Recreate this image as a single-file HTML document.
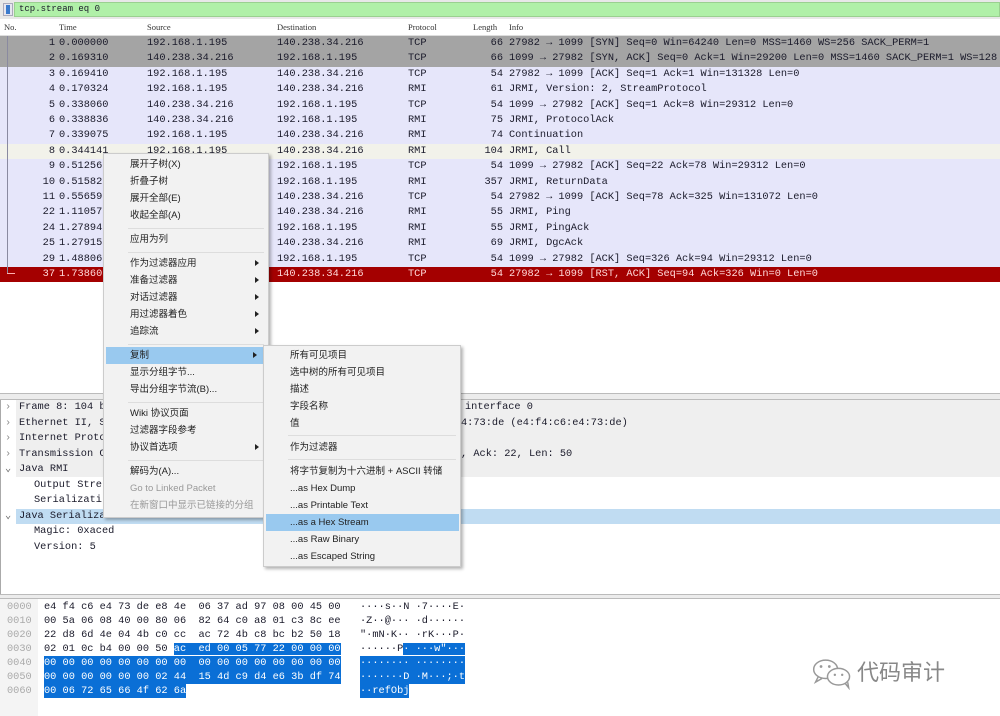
<!DOCTYPE html>
<html><head><meta charset="utf-8">
<style>
*{margin:0;padding:0;box-sizing:border-box}
body{width:1000px;height:716px;overflow:hidden;background:#fff;position:relative;font-family:"Liberation Mono",monospace;font-size:10.3px;color:#1a1a2a}
.a{position:absolute;white-space:pre}
.row{position:absolute;left:0;width:1000px;height:15.4px;line-height:15.4px}
.row span{position:absolute;white-space:pre}
.m{font-family:"Liberation Sans","Noto Sans CJK SC",sans-serif;font-size:9.5px;color:#222}
.mi{position:absolute;left:0;width:100%;height:17px;line-height:17px}
.mi span{position:absolute;left:26px}
.arr{position:absolute;right:9px;top:5px;width:0;height:0;border-left:4px solid #222;border-top:3.5px solid transparent;border-bottom:3.5px solid transparent}
.sep{position:absolute;left:24px;right:4px;height:1px;background:#ddd}
.hx{position:absolute;height:14px;line-height:14px;white-space:pre;font-size:10.3px}
.sel{background:#0a6fd6;color:#fff}
.hd span{position:absolute;top:0}
</style></head><body>
<!-- filter bar -->
<div class="a" style="left:0;top:0;width:1000px;height:19px;background:#e8e8e8"></div>
<div class="a" style="left:14px;top:2px;width:986px;height:15px;background:#b0f0a8;border:1px solid #9ad090"></div>
<div class="a" style="left:3px;top:3px;width:10px;height:13px;background:#e6e6f0;border:1px solid #aab"></div>
<div class="a" style="left:6px;top:5px;width:4px;height:9px;background:#3a7acc"></div>
<div class="a" style="left:19px;top:2px;line-height:15px;font-size:9px">tcp.stream eq 0</div>
<!-- header -->
<div class="hd" style="position:absolute;left:0;top:19px;width:1000px;height:17px;background:#fff;border-bottom:1px solid #ddd;font-family:'Liberation Serif',serif;font-size:8.5px;line-height:17px;color:#333"><span style="left:4px">No.</span><span style="left:59px">Time</span><span style="left:147px">Source</span><span style="left:277px">Destination</span><span style="left:408px">Protocol</span><span style="left:473px">Length</span><span style="left:509px">Info</span></div>
<!-- packet list rows -->
<div style="position:absolute;left:0;top:36px">
<div class="row" style="top:0;background:#a4a4a4"><span style="right:945px">1</span><span style="left:59px">0.000000</span><span style="left:147px">192.168.1.195</span><span style="left:277px">140.238.34.216</span><span style="left:408px">TCP</span><span style="right:497px">66</span><span style="left:509px">27982 → 1099 [SYN] Seq=0 Win=64240 Len=0 MSS=1460 WS=256 SACK_PERM=1</span></div>
<div class="row" style="top:15.4px;background:#a4a4a4"><span style="right:945px">2</span><span style="left:59px">0.169310</span><span style="left:147px">140.238.34.216</span><span style="left:277px">192.168.1.195</span><span style="left:408px">TCP</span><span style="right:497px">66</span><span style="left:509px">1099 → 27982 [SYN, ACK] Seq=0 Ack=1 Win=29200 Len=0 MSS=1460 SACK_PERM=1 WS=128</span></div>
<div class="row" style="top:30.8px;background:#e6e6fa"><span style="right:945px">3</span><span style="left:59px">0.169410</span><span style="left:147px">192.168.1.195</span><span style="left:277px">140.238.34.216</span><span style="left:408px">TCP</span><span style="right:497px">54</span><span style="left:509px">27982 → 1099 [ACK] Seq=1 Ack=1 Win=131328 Len=0</span></div>
<div class="row" style="top:46.2px;background:#e6e6fa"><span style="right:945px">4</span><span style="left:59px">0.170324</span><span style="left:147px">192.168.1.195</span><span style="left:277px">140.238.34.216</span><span style="left:408px">RMI</span><span style="right:497px">61</span><span style="left:509px">JRMI, Version: 2, StreamProtocol</span></div>
<div class="row" style="top:61.6px;background:#e6e6fa"><span style="right:945px">5</span><span style="left:59px">0.338060</span><span style="left:147px">140.238.34.216</span><span style="left:277px">192.168.1.195</span><span style="left:408px">TCP</span><span style="right:497px">54</span><span style="left:509px">1099 → 27982 [ACK] Seq=1 Ack=8 Win=29312 Len=0</span></div>
<div class="row" style="top:77px;background:#e6e6fa"><span style="right:945px">6</span><span style="left:59px">0.338836</span><span style="left:147px">140.238.34.216</span><span style="left:277px">192.168.1.195</span><span style="left:408px">RMI</span><span style="right:497px">75</span><span style="left:509px">JRMI, ProtocolAck</span></div>
<div class="row" style="top:92.4px;background:#e6e6fa"><span style="right:945px">7</span><span style="left:59px">0.339075</span><span style="left:147px">192.168.1.195</span><span style="left:277px">140.238.34.216</span><span style="left:408px">RMI</span><span style="right:497px">74</span><span style="left:509px">Continuation</span></div>
<div class="row" style="top:107.8px;background:#f2f2ea"><span style="right:945px">8</span><span style="left:59px">0.344141</span><span style="left:147px">192.168.1.195</span><span style="left:277px">140.238.34.216</span><span style="left:408px">RMI</span><span style="right:497px">104</span><span style="left:509px">JRMI, Call</span></div>
<div class="row" style="top:123.2px;background:#e6e6fa"><span style="right:945px">9</span><span style="left:59px">0.51256</span><span style="left:277px">192.168.1.195</span><span style="left:408px">TCP</span><span style="right:497px">54</span><span style="left:509px">1099 → 27982 [ACK] Seq=22 Ack=78 Win=29312 Len=0</span></div>
<div class="row" style="top:138.6px;background:#e6e6fa"><span style="right:945px">10</span><span style="left:59px">0.51582</span><span style="left:277px">192.168.1.195</span><span style="left:408px">RMI</span><span style="right:497px">357</span><span style="left:509px">JRMI, ReturnData</span></div>
<div class="row" style="top:154px;background:#e6e6fa"><span style="right:945px">11</span><span style="left:59px">0.55659</span><span style="left:277px">140.238.34.216</span><span style="left:408px">TCP</span><span style="right:497px">54</span><span style="left:509px">27982 → 1099 [ACK] Seq=78 Ack=325 Win=131072 Len=0</span></div>
<div class="row" style="top:169.4px;background:#e6e6fa"><span style="right:945px">22</span><span style="left:59px">1.11057</span><span style="left:277px">140.238.34.216</span><span style="left:408px">RMI</span><span style="right:497px">55</span><span style="left:509px">JRMI, Ping</span></div>
<div class="row" style="top:184.8px;background:#e6e6fa"><span style="right:945px">24</span><span style="left:59px">1.27894</span><span style="left:277px">192.168.1.195</span><span style="left:408px">RMI</span><span style="right:497px">55</span><span style="left:509px">JRMI, PingAck</span></div>
<div class="row" style="top:200.2px;background:#e6e6fa"><span style="right:945px">25</span><span style="left:59px">1.27915</span><span style="left:277px">140.238.34.216</span><span style="left:408px">RMI</span><span style="right:497px">69</span><span style="left:509px">JRMI, DgcAck</span></div>
<div class="row" style="top:215.6px;background:#e6e6fa"><span style="right:945px">29</span><span style="left:59px">1.48806</span><span style="left:277px">192.168.1.195</span><span style="left:408px">TCP</span><span style="right:497px">54</span><span style="left:509px">1099 → 27982 [ACK] Seq=326 Ack=94 Win=29312 Len=0</span></div>
<div class="row" style="top:231px;background:#a40000;color:#ffd8d8"><span style="right:945px">37</span><span style="left:59px">1.73860</span><span style="left:277px">140.238.34.216</span><span style="left:408px">TCP</span><span style="right:497px">54</span><span style="left:509px">27982 → 1099 [RST, ACK] Seq=94 Ack=326 Win=0 Len=0</span></div>
</div>
<div class="a" style="left:7px;top:36px;width:1px;height:238px;background:#8a8aa0"></div>
<div class="a" style="left:7px;top:273px;width:8px;height:1px;background:#ffb0b0"></div>
<!-- dividers -->
<div class="a" style="left:0;top:393px;width:1000px;height:7px;background:#ececec;border-top:1px solid #bbb;border-bottom:1px solid #bbb"></div>
<!-- details -->
<div class="a" style="left:0;top:400px;width:1000px;height:194px;background:#fff;border-left:1px solid #aaa"></div>
<div class="a" style="left:16px;top:400px;width:984px;height:77px;background:#efefef"></div>
<div class="a" style="left:16px;top:509px;width:984px;height:15px;background:#c0dcf2"></div>
<div style="position:absolute;left:0;top:400px;font-size:10.3px;line-height:15.5px">
<div class="a" style="left:5px;top:0;color:#888">›</div><div class="a" style="left:19px;top:0">Frame 8: 104 b</div><div class="a" style="left:465px;top:0">interface 0</div>
<div class="a" style="left:5px;top:15.5px;color:#888">›</div><div class="a" style="left:19px;top:15.5px">Ethernet II, S</div><div class="a" style="left:461px;top:15.5px">4:73:de (e4:f4:c6:e4:73:de)</div>
<div class="a" style="left:5px;top:31px;color:#888">›</div><div class="a" style="left:19px;top:31px">Internet Proto</div>
<div class="a" style="left:5px;top:46.5px;color:#888">›</div><div class="a" style="left:19px;top:46.5px">Transmission C</div><div class="a" style="left:461px;top:46.5px">, Ack: 22, Len: 50</div>
<div class="a" style="left:5px;top:62px;color:#666">⌄</div><div class="a" style="left:19px;top:62px">Java RMI</div>
<div class="a" style="left:34px;top:77.5px">Output Stre</div>
<div class="a" style="left:34px;top:93px">Serializati</div>
<div class="a" style="left:5px;top:108.5px;color:#666">⌄</div><div class="a" style="left:19px;top:108.5px">Java Serialization</div>
<div class="a" style="left:34px;top:124px">Magic: 0xaced</div>
<div class="a" style="left:34px;top:139.5px">Version: 5</div>
</div>
<div class="a" style="left:0;top:594px;width:1000px;height:5px;background:#ececec;border-top:1px solid #bbb;border-bottom:1px solid #bbb"></div>
<!-- hex -->
<div class="a" style="left:0;top:599px;width:38px;height:117px;background:#f4f4f4"></div>
<div style="position:absolute;left:0;top:600px">
<div class="hx" style="left:7px;top:0;color:#aaa">0000</div><div class="hx" style="left:44px;top:0">e4 f4 c6 e4 73 de e8 4e  06 37 ad 97 08 00 45 00</div><div class="hx" style="left:360px;top:0">····s··N ·7····E·</div>
<div class="hx" style="left:7px;top:14px;color:#aaa">0010</div><div class="hx" style="left:44px;top:14px">00 5a 06 08 40 00 80 06  82 64 c0 a8 01 c3 8c ee</div><div class="hx" style="left:360px;top:14px">·Z··@··· ·d······</div>
<div class="hx" style="left:7px;top:28px;color:#aaa">0020</div><div class="hx" style="left:44px;top:28px">22 d8 6d 4e 04 4b c0 cc  ac 72 4b c8 bc b2 50 18</div><div class="hx" style="left:360px;top:28px">"·mN·K·· ·rK···P·</div>
<div class="hx" style="left:7px;top:42px;color:#aaa">0030</div><div class="hx" style="left:44px;top:42px">02 01 0c b4 00 00 50 <span class="sel">ac  ed 00 05 77 22 00 00 00</span></div><div class="hx" style="left:360px;top:42px">······P<span class="sel">· ···w"···</span></div>
<div class="hx" style="left:7px;top:56px;color:#aaa">0040</div><div class="hx sel" style="left:44px;top:56px">00 00 00 00 00 00 00 00  00 00 00 00 00 00 00 00</div><div class="hx sel" style="left:360px;top:56px">········ ········</div>
<div class="hx" style="left:7px;top:70px;color:#aaa">0050</div><div class="hx sel" style="left:44px;top:70px">00 00 00 00 00 00 02 44  15 4d c9 d4 e6 3b df 74</div><div class="hx sel" style="left:360px;top:70px">·······D ·M···;·t</div>
<div class="hx" style="left:7px;top:84px;color:#aaa">0060</div><div class="hx sel" style="left:44px;top:84px">00 06 72 65 66 4f 62 6a</div><div class="hx sel" style="left:360px;top:84px">··refObj</div>
</div>
<!-- watermark -->
<svg class="a" style="left:810px;top:656px" width="46" height="34" viewBox="0 0 50 36"><g fill="none" stroke="#999" stroke-width="1.6"><ellipse cx="17" cy="14" rx="13" ry="10"/><path d="M9 22 l-3 6 l7 -4"/><ellipse cx="31" cy="22" rx="12" ry="9" fill="#fff"/><path d="M38 29 l4 5 l-1 -6"/></g><circle cx="12" cy="11" r="1.5" fill="#999"/><circle cx="21" cy="11" r="1.5" fill="#999"/><circle cx="27" cy="20" r="1.3" fill="#999"/><circle cx="35" cy="20" r="1.3" fill="#999"/></svg>
<div class="a" style="left:857px;top:656px;font-family:'Noto Sans CJK SC',sans-serif;font-size:22px;color:#888;line-height:30px">代码审计</div>
<!-- context menu -->
<div class="a m" style="left:103px;top:153px;width:166px;height:365px;background:#f2f2f2;border:1px solid #ccc;box-shadow:2px 2px 3px rgba(0,0,0,.3)">
<div class="mi" style="top:2px"><span>展开子树(X)</span></div>
<div class="mi" style="top:19px"><span>折叠子树</span></div>
<div class="mi" style="top:36px"><span>展开全部(E)</span></div>
<div class="mi" style="top:53px"><span>收起全部(A)</span></div>
<div class="sep" style="top:74px"></div>
<div class="mi" style="top:77px"><span>应用为列</span></div>
<div class="sep" style="top:98px"></div>
<div class="mi" style="top:101px"><span>作为过滤器应用</span><i class="arr"></i></div>
<div class="mi" style="top:118px"><span>准备过滤器</span><i class="arr"></i></div>
<div class="mi" style="top:135px"><span>对话过滤器</span><i class="arr"></i></div>
<div class="mi" style="top:152px"><span>用过滤器着色</span><i class="arr"></i></div>
<div class="mi" style="top:169px"><span>追踪流</span><i class="arr"></i></div>
<div class="sep" style="top:190px"></div>
<div class="mi" style="top:193px;left:2px;width:160px;background:#99c9ef"><span style="left:24px">复制</span><i class="arr"></i></div>
<div class="mi" style="top:210px"><span>显示分组字节...</span></div>
<div class="mi" style="top:227px"><span>导出分组字节流(B)...</span></div>
<div class="sep" style="top:248px"></div>
<div class="mi" style="top:251px"><span>Wiki 协议页面</span></div>
<div class="mi" style="top:268px"><span>过滤器字段参考</span></div>
<div class="mi" style="top:285px"><span>协议首选项</span><i class="arr"></i></div>
<div class="sep" style="top:306px"></div>
<div class="mi" style="top:309px"><span>解码为(A)...</span></div>
<div class="mi" style="top:326px;color:#999"><span>Go to Linked Packet</span></div>
<div class="mi" style="top:343px;color:#999"><span>在新窗口中显示已链接的分组</span></div>
</div>
<!-- submenu -->
<div class="a m" style="left:263px;top:345px;width:198px;height:222px;background:#f2f2f2;border:1px solid #ccc;box-shadow:2px 2px 3px rgba(0,0,0,.3)">
<div class="mi" style="top:1px"><span>所有可见项目</span></div>
<div class="mi" style="top:18px"><span>选中树的所有可见项目</span></div>
<div class="mi" style="top:35px"><span>描述</span></div>
<div class="mi" style="top:52px"><span>字段名称</span></div>
<div class="mi" style="top:69px"><span>值</span></div>
<div class="sep" style="top:89px"></div>
<div class="mi" style="top:93px"><span>作为过滤器</span></div>
<div class="sep" style="top:113px"></div>
<div class="mi" style="top:117px"><span>将字节复制为十六进制 + ASCII 转储</span></div>
<div class="mi" style="top:134px"><span>...as Hex Dump</span></div>
<div class="mi" style="top:151px"><span>...as Printable Text</span></div>
<div class="mi" style="top:168px;left:2px;width:193px;background:#99c9ef"><span style="left:24px">...as a Hex Stream</span></div>
<div class="mi" style="top:185px"><span>...as Raw Binary</span></div>
<div class="mi" style="top:202px"><span>...as Escaped String</span></div>
</div>
</body></html>
